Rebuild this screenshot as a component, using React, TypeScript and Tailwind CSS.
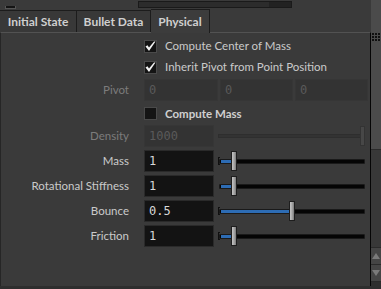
import React from "react";

const labelFont = { fontFamily: "Lato, 'Liberation Sans', sans-serif" };

const Check = ({ checked }: { checked: boolean }) => (
  <div className="w-[13px] h-[13px] bg-[#141414] border border-[#4a4a4a] flex items-center justify-center">
    {checked && (
      <svg width="11" height="11" viewBox="0 0 11 11">
        <path d="M0.5 5.5 L4 10 L10.5 0.5 L9 0.5 L4 6.5 L2.5 4.3 Z" fill="#f2f2f2" />
      </svg>
    )}
  </div>
);

const Label = ({ text, disabled }: { text: string; disabled?: boolean }) => (
  <div
    className={`w-[128px] shrink-0 text-right text-[11.5px] ${disabled ? "text-[#7c7c7c]" : "text-[#cacaca]"}`}
    style={labelFont}
  >
    {text}
  </div>
);

const Field = ({ value, disabled, w = "w-[70px]" }: { value: string; disabled?: boolean; w?: string }) => (
  <div
    className={`${w} h-[22px] shrink-0 flex items-center pl-[4px] text-[12px] border ${
      disabled ? "bg-[#333333] border-[#363636] text-[#5a5a5a]" : "bg-[#131313] border-[#2a2a2a] text-[#d8d8d8]"
    }`}
    style={{ fontFamily: "'DejaVu Sans Mono', monospace" }}
  >
    {value}
  </div>
);

const Slider = ({ pos, bracket }: { pos: number; bracket?: boolean }) => (
  <div className="relative w-[148px] h-[22px] ml-[4px] flex items-center">
    {bracket && <div className="absolute left-0 top-[7px] w-[2px] h-[8px] border-l border-y border-[#101010]" />}
    <div className="ml-[1px] w-[146px] h-[5px] bg-[#050505] border border-[#1a1a1a] rounded-[1px] relative">
      <div className="absolute left-[1px] top-[0px] h-[3px] bg-[#2d6cb4]" style={{ width: pos }} />
    </div>
    <div
      className="absolute top-[1px] w-[6px] h-[20px] border border-[#1e1e1e] bg-gradient-to-r from-[#c4c4c4] via-[#a8a8a8] to-[#7a7a7a]"
      style={{ left: pos + 2 }}
    />
  </div>
);

const NumRow = ({ label, value, pos, bracket }: { label: string; value: string; pos: number; bracket?: boolean }) => (
  <div className="flex items-center h-[22px] mt-[3px]">
    <Label text={label} />
    <div className="w-[15px]" />
    <Field value={value} />
    <Slider pos={pos} bracket={bracket} />
  </div>
);

export default function App() {
  return (
    <div className="w-[381px] h-[289px] bg-[#3a3a3a] overflow-hidden flex" style={labelFont}>
      <div className="flex-1 flex flex-col min-w-0">
        {/* cut-off row above */}
        <div className="h-[9px] overflow-hidden relative">
          <div className="flex items-end h-[9px]">
            <div className="ml-[5px] w-[11px] h-[3px] bg-[#141414] border-x border-b border-[#555]" />
            <div className="ml-[122px] w-[154px] h-[7px] mb-[1px] bg-[#2c2c2c] border border-[#1a1a1a] flex justify-end">
              <div className="w-[22px] h-full bg-[#222222]" />
            </div>
          </div>
        </div>
        {/* tabs */}
        <div className="flex h-[24px] text-[12px] font-bold text-[#cfcfcf]">
          <div className="w-[77px] h-[23px] mt-[1px] flex items-center justify-center bg-[#383838] border border-[#1c1c1c] border-l-0">
            Initial State
          </div>
          <div className="w-[74px] h-[23px] mt-[1px] flex items-center justify-center bg-[#383838] border border-[#1c1c1c] border-l-0">
            Bullet Data
          </div>
          <div className="w-[59px] h-[24px] flex items-center justify-center bg-[#3c3c3c] border border-[#1c1c1c] border-l-0 border-b-0 relative z-10">
            Physical
          </div>
        </div>
        {/* panel */}
        <div className="flex-1 border-t border-[#525252] border-l border-l-[#262626] border-r border-r-[#050505] mt-[-1px] flex flex-col">
          <div className="flex items-center h-[22px] mt-[2px]">
            <div className="w-[143px] shrink-0" />
            <Check checked />
            <span className="ml-[8px] text-[11.5px] text-[#cacaca]">Compute Center of Mass</span>
          </div>
          <div className="flex items-center h-[20px]">
            <div className="w-[143px] shrink-0" />
            <Check checked />
            <span className="ml-[8px] text-[11.5px] text-[#cacaca]">Inherit Pivot from Point Position</span>
          </div>
          <div className="flex items-center h-[22px] mt-[2px]">
            <Label text="Pivot" disabled />
            <div className="w-[15px]" />
            <Field value="0" disabled w="w-[74px]" />
            <div className="w-[2px]" />
            <Field value="0" disabled w="w-[73px]" />
            <div className="w-[2px]" />
            <Field value="0" disabled w="w-[73px]" />
          </div>
          <div className="flex items-center h-[23px] mt-[1px]">
            <div className="w-[143px] shrink-0" />
            <Check checked={false} />
            <span className="ml-[8px] text-[11.5px] font-bold text-[#d0d0d0]">Compute Mass</span>
          </div>
          <div className="flex items-center h-[22px]">
            <Label text="Density" disabled />
            <div className="w-[15px]" />
            <Field value="1000" disabled />
            <div className="relative w-[148px] h-[22px] ml-[4px] flex items-center">
              <div className="w-[146px] h-[4px] bg-[#333333] border border-[#2e2e2e]" />
              <div className="absolute right-[1px] top-[1px] w-[5px] h-[20px] bg-[#474747] border border-[#333]" />
            </div>
          </div>
          <NumRow label="Mass" value="1" pos={11} bracket />
          <NumRow label="Rotational Stiffness" value="1" pos={11} />
          <NumRow label="Bounce" value="0.5" pos={69} bracket />
          <NumRow label="Friction" value="1" pos={11} bracket />
          <div className="flex-1" />
          <div className="h-[3px] bg-[#2e2e2e] -mx-[1px]" />
        </div>
      </div>
      {/* scrollbar */}
      <div className="w-[10px] flex flex-col bg-[#383838]">
        <div className="h-[150px] bg-[#4b4b4b] border-b border-[#2a2a2a] flex flex-col items-center pt-[33px]">
          <div className="grid grid-cols-3 gap-[1px]">
            {Array.from({ length: 9 }).map((_, i) => (
              <div key={i} className="w-[2px] h-[2px] bg-[#101010]" />
            ))}
          </div>
        </div>
        <div className="flex-1" />
        <div className="h-[17px] bg-[#454545] border-t border-[#2a2a2a] flex items-center justify-center">
          <svg width="8" height="6" viewBox="0 0 8 6"><path d="M4 0 L8 6 L0 6 Z" fill="#7a7a7a" /></svg>
        </div>
        <div className="h-[17px] bg-[#454545] border-t border-[#2a2a2a] flex items-center justify-center">
          <svg width="8" height="6" viewBox="0 0 8 6"><path d="M0 0 L8 0 L4 6 Z" fill="#7a7a7a" /></svg>
        </div>
        <div className="h-[8px] bg-[#2e2e2e] border-t border-[#2a2a2a]" />
      </div>
    </div>
  );
}
